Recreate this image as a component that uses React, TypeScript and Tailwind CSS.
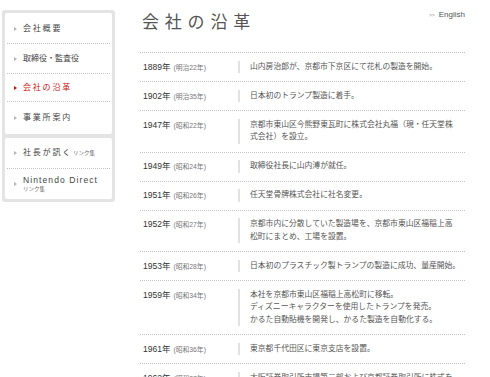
import React from "react";

type Entry = {
  year: string;
  era: string;
  lines: string[];
};

const history: Entry[] = [
  { year: "1889年", era: "(明治22年)", lines: ["山内房治郎が、京都市下京区にて花札の製造を開始。"] },
  { year: "1902年", era: "(明治35年)", lines: ["日本初のトランプ製造に着手。"] },
  {
    year: "1947年",
    era: "(昭和22年)",
    lines: ["京都市東山区今熊野東瓦町に株式会社丸福（現・任天堂株", "式会社）を設立。"],
  },
  { year: "1949年", era: "(昭和24年)", lines: ["取締役社長に山内溥が就任。"] },
  { year: "1951年", era: "(昭和26年)", lines: ["任天堂骨牌株式会社に社名変更。"] },
  {
    year: "1952年",
    era: "(昭和27年)",
    lines: ["京都市内に分散していた製造場を、京都市東山区福稲上高", "松町にまとめ、工場を設置。"],
  },
  { year: "1953年", era: "(昭和28年)", lines: ["日本初のプラスチック製トランプの製造に成功、量産開始。"] },
  {
    year: "1959年",
    era: "(昭和34年)",
    lines: [
      "本社を京都市東山区福稲上高松町に移転。",
      "ディズニーキャラクターを使用したトランプを発売。",
      "かるた自動貼機を開発し、かるた製造を自動化する。",
    ],
  },
  { year: "1961年", era: "(昭和36年)", lines: ["東京都千代田区に東京支店を設置。"] },
  {
    year: "1962年",
    era: "(昭和37年)",
    lines: ["大阪証券取引所市場第二部および京都証券取引所に株式を", "上場。"],
  },
];

function Marker({ active }: { active?: boolean }) {
  return (
    <span
      className={`inline-block w-0 h-0 border-y-[2.5px] border-y-transparent border-l-[3px] mr-[6px] ${
        active ? "border-l-[#cc1111]" : "border-l-[#b5b5b5]"
      }`}
    />
  );
}

function NavItem({
  label,
  active,
  spaced,
  last,
  height = "h-[30px]",
}: {
  label: string;
  active?: boolean;
  spaced?: boolean;
  last?: boolean;
  height?: string;
}) {
  return (
    <div
      className={`flex items-center ${height} pl-[7px] ${
        last ? "" : "border-b border-dotted border-[#c4c4c4]"
      }`}
    >
      <Marker active={active} />
      <span
        className={`text-[8px] leading-[10px] ${spaced ? "tracking-[1.8px]" : ""} ${
          active ? "text-[#cc1111]" : "text-[#444]"
        }`}
      >
        {label}
      </span>
    </div>
  );
}

function Sidebar() {
  return (
    <div className="w-[113px] ml-[2px] mt-[10px] bg-[#e4e4e4] rounded-[3px] p-[3px] flex flex-col gap-[4px]">
      <div className="bg-white rounded-[2px] px-[2px] pt-[1px]">
        <NavItem label="会社概要" spaced />
        <NavItem label="取締役・監査役" />
        <NavItem label="会社の沿革" spaced active height="h-[28px]" />
        <NavItem label="事業所案内" spaced last height="h-[32px]" />
      </div>
      <div className="bg-white rounded-[2px] px-[2px]">
        <div className="flex items-center h-[31px] pl-[7px] border-b border-dotted border-[#c4c4c4]">
          <Marker />
          <span className="text-[8px] leading-[10px] tracking-[1.8px] text-[#444]">社長が訊く</span>
          <span className="text-[5.5px] leading-[10px] text-[#666] ml-[1px]">リンク集</span>
        </div>
        <div className="flex items-center h-[30px] pl-[7px]">
          <Marker />
          <div className="flex flex-col">
            <span className="text-[8.5px] leading-[10px] tracking-[1.1px] text-[#444]">Nintendo Direct</span>
            <span className="text-[5.5px] leading-[9px] text-[#666]">リンク集</span>
          </div>
        </div>
      </div>
    </div>
  );
}

function Row({ entry }: { entry: Entry }) {
  return (
    <div className="flex items-start pt-[7.5px] pb-[8px] border-b border-dotted border-[#c4c4c4]">
      <div className="w-[98px] h-[12.5px] pl-[3px] flex items-baseline whitespace-nowrap">
        <span className="text-[8.5px] leading-[12.5px] text-[#333]">{entry.year}</span>
        <span className="text-[6.8px] leading-[12.5px] text-[#777] ml-[3px]">{entry.era}</span>
      </div>
      <div className="border-l-2 border-[#e2e2e2] pl-[10px] text-[7.8px] text-[#555] whitespace-nowrap">
        {entry.lines.map((line, i) => (
          <div key={i} className="h-[12.5px] leading-[12.5px]">
            {line}
          </div>
        ))}
      </div>
    </div>
  );
}

export default function App() {
  return (
    <div
      className="w-[490px] h-[377px] overflow-hidden bg-white flex items-start"
      style={{ fontFamily: '"Liberation Sans", "Noto Sans CJK JP", sans-serif' }}
    >
      <Sidebar />
      <div className="ml-[25px] w-[325px]">
        <div className="flex justify-between items-start h-[53px] border-b border-dotted border-[#c4c4c4]">
          <h1 className="pt-[13px] pl-[2px] text-[17px] leading-[20px] tracking-[5.8px] text-[#555] font-normal">
            会社の沿革
          </h1>
          <div className="pt-[10px] flex items-center text-[8px] leading-[10px] text-[#555]">
            <span className="text-[5px] text-[#888] mr-[4px]">&gt;&gt;</span>
            English
          </div>
        </div>
        {history.map((e) => (
          <Row key={e.year} entry={e} />
        ))}
      </div>
    </div>
  );
}
